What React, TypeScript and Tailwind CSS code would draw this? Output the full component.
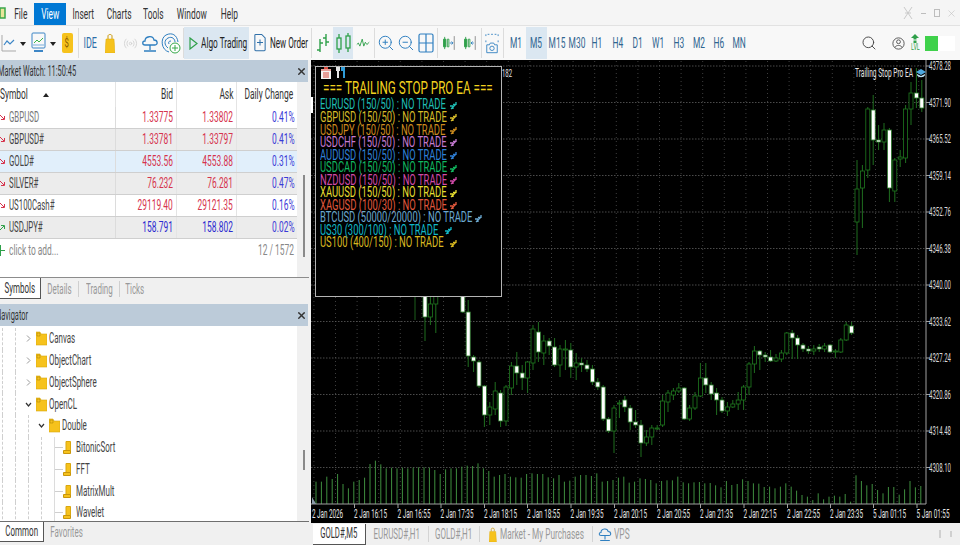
import type { ReactNode } from 'react'
import clsx from 'clsx'
import { twMerge } from 'tailwind-merge'
import { Radio, Search, X, ZoomIn, ZoomOut } from 'lucide-react'

const FONT = "font-['Roboto','Liberation_Sans',Arial,sans-serif]"

// the screenshot is squeezed horizontally, so all text goes through this
const T = ({ children, className }: { children: ReactNode; className?: string }) => (
  <span className={twMerge('inline-block shrink-0 origin-center scale-x-[0.6] whitespace-nowrap', className)}>{children}</span>
)

const Left = ({ children, className }: { children: ReactNode; className?: string }) => (
  <T className={clsx('origin-left', className)}>{children}</T>
)

const Right = ({ children, className }: { children: ReactNode; className?: string }) => (
  <T className={clsx('origin-right', className)}>{children}</T>
)

const Divider = ({ w = 4 }: { w?: number }) => (
  <div className={clsx('flex h-[34px] items-center justify-center', w === 2 ? 'w-[2px]' : w === 3 ? 'w-[3px]' : 'w-[4px]')}>
    <div className="h-[30px] w-px bg-[#dcdcdc]" />
  </div>
)

const Cell = ({ w, active, children }: { w: string; active?: boolean; children: ReactNode }) => (
  <div className={clsx('flex h-[32px] items-center justify-center', w, active && 'bg-[#dbe7f1]')}>{children}</div>
)

const Caret = () => <div className="mt-[2px] h-0 w-0 border-x-[3px] border-t-[4px] border-x-transparent border-t-[#222]" />

const LineIcon = () => (
  <svg width="16" height="20" viewBox="0 0 16 20" fill="none">
    <path d="M1 2v16h14" stroke="#a9a9a9" />
    <path d="M3 12l3-4 3 3 4-4" stroke="#3d86c6" strokeWidth="1.2" />
  </svg>
)

const TemplateIcon = () => (
  <svg width="15" height="22" viewBox="0 0 15 22" fill="none">
    <rect x="1" y="1" width="13" height="15" rx="1" stroke="#3d86c6" />
    <path d="M3 11l3-3 2 2 4-4" stroke="#3bb54a" />
    <path d="M2 13h11" stroke="#b7d3ea" strokeWidth="2" />
    <path d="M3 19h9" stroke="#3d86c6" strokeWidth="2" />
  </svg>
)

const BagIcon = ({ h = 20 }: { h?: number }) => (
  <svg width={h / 2} height={h} viewBox="0 0 10 20" fill="none" className="shrink-0">
    <path d="M3 6V3c0-2 4-2 4 0v3" stroke="#c99a10" />
    <path d="M1 6h8l1 14H0z" fill="#f6c21c" stroke="#dca80e" strokeWidth=".5" />
  </svg>
)

const CloudIcon = ({ size = 20 }: { size?: number }) => (
  <svg width={size} height={size} viewBox="0 0 20 20" fill="none" stroke="#2f7fc0" strokeWidth="1.3" className="shrink-0">
    <path d="M5 12c-3 0-3-4 0-4 0-5 8-6 9-1 4 0 4 5 1 5z" />
    <path d="M10 12v5M4 18h12" />
  </svg>
)

const TargetIcon = () => (
  <svg width="20" height="22" viewBox="0 0 20 22" fill="none">
    <path d="M8 20C0 18-1 6 5 3s11 0 12 7" stroke="#2f7fc0" />
    <path d="M7 16C3 13 3 8 7 6s7 1 7 4" stroke="#2f7fc0" />
    <path d="M8 12c-1-2 0-3 2-3" stroke="#2f7fc0" />
    <circle cx="14" cy="16" r="5" fill="#fff" stroke="#36a84a" />
    <path d="M14 13v6M11 16h6" stroke="#36a84a" />
  </svg>
)

const NewOrderIcon = () => (
  <svg width="12" height="22" viewBox="0 0 14 22" fill="none" stroke="#2f6fa8" strokeWidth="1.2" className="shrink-0">
    <path d="M9 1H2a1 1 0 0 0-1 1v17a1 1 0 0 0 1 1h10a1 1 0 0 0 1-1V5z" />
    <path d="M7 7v7M3.500 10.500h7" />
  </svg>
)

const BarsIcon = () => (
  <svg width="14" height="20" viewBox="0 0 14 20" fill="none" stroke="#2fa04a" strokeWidth="1.4">
    <path d="M4 6v13M1 17h3M4 10h3M10 1v12M7 5h3M10 9h3" />
  </svg>
)

const CandlesIcon = () => (
  <svg width="15" height="22" viewBox="0 0 15 22" fill="none" stroke="#2fa04a" strokeWidth="1.3">
    <rect x="1" y="6" width="4" height="11" />
    <path d="M3 2v4M3 17v4" />
    <rect x="10" y="4" width="4" height="12" />
    <path d="M12 1v3M12 16v4" />
  </svg>
)

const WaveIcon = () => (
  <svg width="14" height="14" viewBox="0 0 18 14" fill="none" stroke="#2fa04a" strokeWidth="1.2">
    <path d="M1 9l2-2 2 4 3-9 2 9 2-5 2 3 3-3" />
  </svg>
)

const GridIcon = () => (
  <svg width="16" height="20" viewBox="0 0 16 20" fill="none" stroke="#2f7fc0" strokeWidth="1.2">
    <rect x="1" y="1" width="14" height="18" rx="1.500" />
    <path d="M8 1v18M1 10h14" />
  </svg>
)

const ShiftIcon = ({ flip }: { flip?: boolean }) => (
  <svg width="13" height="20" viewBox="0 0 17 20" fill="none" strokeWidth="1.2">
    <path d="M2 5h3v10H2zM3.500 2v16" stroke="#2fa04a" fill="#2fa04a" />
    <path d="M7 5h2v10H7z" stroke="#2fa04a" />
    <path d="M16 1v18" stroke="#8a8a8a" />
    {flip ? <path d="M14 10h-3.500M12.500 8l-2 2 2 2" stroke="#2f7fc0" /> : <path d="M10 10h4M12.500 8l2 2-2 2" stroke="#2f7fc0" />}
  </svg>
)

const CameraIcon = () => (
  <svg width="14" height="23" viewBox="0 0 16 23" fill="none" stroke="#2f7fc0">
    <path d="M1 3V1h14v3M1 8v3M15 8v2" strokeDasharray="2 2" />
    <path d="M2 13h3l1-2h4l1 2h3v9H2z" />
    <circle cx="8" cy="17" r="2.500" />
  </svg>
)

const UserIcon = () => (
  <svg width="13" height="15" viewBox="0 0 15 15" fill="none" stroke="#444">
    <circle cx="7.500" cy="7.500" r="6.500" />
    <circle cx="7.500" cy="5.500" r="2.200" />
    <path d="M3.500 12c1-3 7-3 8 0" />
  </svg>
)

const toolbarFrames = ['M1', 'M5', 'M15', 'M30', 'H1', 'H4', 'D1', 'W1', 'H3', 'M2', 'H6', 'MN']

const Toolbar = () => (
  <div className="flex h-[34px] items-center bg-[#f8f8f8] text-[14px] text-[#222]">
    <Cell w="w-[18px]"><LineIcon /></Cell>
    <Cell w="w-[10px]"><Caret /></Cell>
    <Cell w="w-[20px]"><TemplateIcon /></Cell>
    <Cell w="w-[10px]"><Caret /></Cell>
    <Cell w="w-[18px]">
      <div className="flex h-[20px] w-[11px] items-center justify-center rounded-[2px] bg-[#f6c21c] text-[13px] text-[#8a5a00]">
        <T>$</T>
      </div>
    </Cell>
    <Divider />
    <Cell w="w-[20px]"><T className="text-[15px] text-[#2f6fa8]">IDE</T></Cell>
    <Cell w="w-[20px]"><BagIcon /></Cell>
    <Cell w="w-[20px]"><Radio size={15} strokeWidth={1.3} className="text-[#cfcfcf]" /></Cell>
    <Cell w="w-[20px]"><CloudIcon /></Cell>
    <Cell w="w-[22px]"><TargetIcon /></Cell>
    <Divider w={2} />
    <Cell w="w-[65px]" active>
      <div className="flex w-full items-center pl-[5px]">
        <svg width="9" height="13" viewBox="0 0 9 13" fill="none" stroke="#2fa04a" strokeWidth="1.2" className="shrink-0">
          <path d="M1 1l7 5.500-7 5.500z" />
        </svg>
        <Left className="ml-[3px] scale-x-[0.59]">Algo Trading</Left>
      </div>
    </Cell>
    <Cell w="w-[61px]">
      <div className="flex w-full items-center pl-[5px]">
        <NewOrderIcon />
        <Left className="ml-[4px] scale-x-[0.58]">New Order</Left>
      </div>
    </Cell>
    <Divider w={3} />
    <Cell w="w-[20px]"><BarsIcon /></Cell>
    <Cell w="w-[20px]" active><CandlesIcon /></Cell>
    <Cell w="w-[20px]"><WaveIcon /></Cell>
    <Divider w={2} />
    <Cell w="w-[21px]"><ZoomIn size={18} strokeWidth={1.3} className="text-[#2f7fc0]" /></Cell>
    <Cell w="w-[20px]"><ZoomOut size={18} strokeWidth={1.3} className="text-[#2f7fc0]" /></Cell>
    <Cell w="w-[20px]"><GridIcon /></Cell>
    <Divider w={2} />
    <Cell w="w-[21px]"><ShiftIcon /></Cell>
    <Cell w="w-[21px]"><ShiftIcon flip /></Cell>
    <Divider w={2} />
    <Cell w="w-[20px]"><CameraIcon /></Cell>
    <Divider w={3} />
    <div className="ml-px flex">
      {toolbarFrames.map((f) => (
        <Cell key={f} w="w-[20.300px]" active={f === 'M5'}>
          <T className="text-[14px] text-[#2f6590]">{f}</T>
        </Cell>
      ))}
    </div>
    <div className="flex-1" />
    <Search size={16} strokeWidth={1.4} className="mr-[15px] text-[#444]" />
    <UserIcon />
    <div className="ml-[4px] flex w-[12px] flex-col items-center text-[#2fa04a]">
      <svg width="8" height="9" viewBox="0 0 8 9" fill="#2fa04a"><path d="M4 0l4 4H5.500v1.500h-3V4H0zM2.500 6.500h3V9h-3z" /></svg>
      <T className="text-[9px] leading-[9px]">LVL</T>
    </div>
    <div className="ml-[4px] mr-[5px] flex h-[15px] w-[30px] bg-white">
      <div className="w-[13px] bg-[#3fd14b]" />
    </div>
  </div>
)

const MenuBar = () => {
  const items = [
    ['File', 'w-[26px]'],
    ['View', 'w-[32px]'],
    ['Insert', 'w-[34px]'],
    ['Charts', 'w-[38px]'],
    ['Tools', 'w-[30px]'],
    ['Window', 'w-[48px]'],
    ['Help', 'w-[26px]'],
  ]
  return (
    <div className="flex h-[26px] items-start border-b border-[#e2e2e2] bg-[#f5f5f5] text-[15px] text-[#333]">
      <svg width="8" height="26" viewBox="0 0 8 26" fill="none" className="shrink-0">
        <path d="M0 8h5v10H0z" stroke="#3aa64a" strokeWidth="1.500" fill="#e8e59a" />
      </svg>
      {items.map(([label, w]) => (
        <div
          key={label}
          className={clsx('mt-[3px] flex h-[22px] items-center justify-center', w, label === 'View' && 'bg-[#0078d4] text-white')}
        >
          <T className="scale-x-[0.56]">{label}</T>
        </div>
      ))}
      <div className="flex-1" />
      <div className="flex h-[26px] items-center pr-[3px] text-[#bdbdbd]">
        <svg width="10" height="14" viewBox="0 0 10 14" fill="none" stroke="#c9c9c9"><path d="M1 1l8 12M9 1L1 13M2 7h6" /></svg>
        <span className="ml-[8px] h-px w-[5px] bg-[#bdbdbd]" />
        <span className="ml-[8px] h-[8px] w-[6px] border border-[#bdbdbd]" />
        <X size={11} strokeWidth={1.2} className="ml-[6px]" />
      </div>
    </div>
  )
}

type Quote = { symbol: string; bid: string; ask: string; change: string; up?: boolean; bg: string; dim?: boolean }

const quotes: Quote[] = [
  { symbol: 'GBPUSD', bid: '1.33775', ask: '1.33802', change: '0.41%', bg: 'bg-white', dim: true },
  { symbol: 'GBPUSD#', bid: '1.33781', ask: '1.33797', change: '0.41%', bg: 'bg-[#ececec]' },
  { symbol: 'GOLD#', bid: '4553.56', ask: '4553.88', change: '0.31%', bg: 'bg-[#e1effb]' },
  { symbol: 'SILVER#', bid: '76.232', ask: '76.281', change: '0.47%', bg: 'bg-[#ececec]' },
  { symbol: 'US100Cash#', bid: '29119.40', ask: '29121.35', change: '0.16%', bg: 'bg-white' },
  { symbol: 'USDJPY#', bid: '158.791', ask: '158.802', change: '0.02%', up: true, bg: 'bg-[#ececec]' },
]

const QuoteRow = ({ q }: { q: Quote }) => {
  const priceColor = q.up ? 'text-[#2b2bd0]' : 'text-[#d6334c]'
  return (
    <div className={clsx('flex h-[22px] items-center border-b border-[#cfcfcf] text-[14px]', q.bg)}>
      <div className="flex w-[116px] items-center border-r border-[#dcdcdc] leading-[21px]">
        <svg width="5" height="7" viewBox="0 0 5 7" fill="none" className="shrink-0" stroke={q.up ? '#2fa04a' : '#d6334c'}>
          {q.up ? <path d="M0 6l4-4M1 1.500h3.500V5" /> : <path d="M0 1l4 4M1 5.500h3.500V2" />}
        </svg>
        <Left className={clsx('ml-[4px] scale-x-[0.56]', q.dim ? 'text-[#777]' : 'text-[#444]')}>{q.symbol}</Left>
      </div>
      <div className={clsx('flex w-[61px] justify-end border-r border-[#e4e4e4] pr-[3px] leading-[21px]', priceColor)}><Right>{q.bid}</Right></div>
      <div className={clsx('flex w-[60px] justify-end border-r border-[#e4e4e4] pr-[3px] leading-[21px]', priceColor)}><Right>{q.ask}</Right></div>
      <div className="flex w-[60px] justify-end pr-[2px] leading-[21px] text-[#3a3ad6]"><Right>{q.change}</Right></div>
    </div>
  )
}

const PanelHeader = ({ title, indent }: { title: string; indent: string }) => (
  <div className="flex h-[22px] w-[308px] shrink-0 items-center bg-[#bccbd9] text-[14px] text-[#333]">
    <Left className={clsx('scale-x-[0.53]', indent)}>{title}</Left>
    <div className="flex-1" />
    <X size={11} strokeWidth={3} className="mr-[1px] text-[#333]" />
  </div>
)

const MarketWatch = () => (
  <div className="flex h-[217px] shrink-0 flex-col">
    <PanelHeader title="Market Watch: 11:50:45" indent="-ml-[2px]" />
    <div className="flex flex-1">
      <div className="flex w-[297px] flex-col bg-white">
        <div className="flex h-[25px] items-center text-[14px] text-[#333]">
          <div className="flex h-full w-[116px] items-center border-r border-[#e4e4e4]">
            <Left>Symbol</Left>
            <div className="-ml-[3px] h-0 w-0 border-x-[3px] border-b-[4px] border-x-transparent border-b-[#222]" />
          </div>
          <div className="flex h-full w-[61px] items-center justify-end border-r border-[#e4e4e4] pr-[3px]"><Right>Bid</Right></div>
          <div className="flex h-full w-[60px] items-center justify-end border-r border-[#e4e4e4] pr-[3px]"><Right>Ask</Right></div>
          <div className="flex h-full w-[60px] items-center justify-end pr-[4px]"><Right>Daily Change</Right></div>
        </div>
        {quotes.map((q) => (
          <QuoteRow key={q.symbol} q={q} />
        ))}
        <div className="flex h-[23px] items-center text-[14px] text-[#888]">
          <span className="relative mr-[3px] h-[11px] w-[6px] shrink-0">
            <span className="absolute left-0 top-0 h-[11px] w-px bg-[#2fa04a]" />
            <span className="absolute left-0 top-[5px] h-px w-[5px] bg-[#2fa04a]" />
          </span>
          <Left>click to add...</Left>
          <div className="flex-1" />
          <Right className="mr-[3px]">12 / 1572</Right>
        </div>
      </div>
      <div className="flex w-[13px] flex-col bg-[#f0f0f0]">
        <div className="ml-[6px] mt-[93px] h-[82px] w-[2px] bg-[#8a8a8a]" />
      </div>
    </div>
  </div>
)

const WatchTabs = () => {
  const tabs = ['Details', 'Trading', 'Ticks']
  return (
    <div className="flex h-[27px] w-[309px] shrink-0 items-start border-t border-[#8c8c8c] bg-[#f0f0f0] text-[14px]">
      <div className="flex h-[21px] w-[41px] items-center justify-center border-r border-b border-[#555] bg-white text-[#333]">
        <T className="scale-x-[0.57]">Symbols</T>
      </div>
      {tabs.map((t, i) => (
        <div
          key={t}
          className={clsx(
            'mt-[3px] flex h-[16px] items-center justify-center text-[#999]',
            i < 2 && 'border-r border-[#cfcfcf]',
            i === 0 ? 'w-[38px]' : i === 1 ? 'w-[41px]' : 'w-[30px]',
          )}
        >
          <T className="scale-x-[0.57]">{t}</T>
        </div>
      ))}
    </div>
  )
}

type Node = { label: string; level: 0 | 1 | 2; open?: boolean }

const tree: Node[] = [
  { label: 'Canvas', level: 0 },
  { label: 'ObjectChart', level: 0 },
  { label: 'ObjectSphere', level: 0 },
  { label: 'OpenCL', level: 0, open: true },
  { label: 'Double', level: 1, open: true },
  { label: 'BitonicSort', level: 2 },
  { label: 'FFT', level: 2 },
  { label: 'MatrixMult', level: 2 },
  { label: 'Wavelet', level: 2 },
]

const Folder = () => (
  <svg width="11" height="15" viewBox="0 0 11 15" className="shrink-0">
    <path d="M0 1h4l1 2h6v11H0z" fill="#f6c21c" stroke="#d9a70f" strokeWidth=".6" />
    <path d="M1 2h3v3H1z" fill="none" stroke="#a67c00" strokeWidth=".5" />
  </svg>
)

const Script = () => (
  <svg width="8" height="13" viewBox="0 0 8 13" className="shrink-0">
    <path d="M3 .5h4.500v9H3z" fill="#f6c21c" stroke="#d9a70f" />
    <path d="M.5 9.500h7v3h-7z" fill="#f6c21c" stroke="#c9960a" />
  </svg>
)

const Chevron = ({ open }: { open?: boolean }) => (
  <svg width="7" height="7" viewBox="0 0 7 7" fill="none" stroke={open ? '#333' : '#999'} strokeWidth={open ? 1.2 : 1} className="shrink-0">
    {open ? <path d="M1 2l2.500 3L6 2" /> : <path d="M2 .5l3 3-3 3" />}
  </svg>
)

const TreeRow = ({ node }: { node: Node }) => (
  <div className="relative flex h-[21.750px] items-center text-[14px] text-[#444]">
    <span className="absolute inset-y-0 left-[2px] border-l border-dashed border-[#cfcfcf]" />
    <span className="absolute inset-y-0 left-[15px] border-l border-dashed border-[#cfcfcf]" />
    {node.level > 0 && <span className="absolute inset-y-0 left-[28px] border-l border-dashed border-[#cfcfcf]" />}
    {node.level === 2 && <span className="absolute inset-y-0 left-[41px] border-l border-dashed border-[#cfcfcf]" />}
    {node.level === 2 && <span className="absolute inset-y-0 left-[54px] border-l border-[#dcdcdc]" />}
    {node.level === 0 && (
      <>
        <span className="ml-[25px] flex w-[11px]"><Chevron open={node.open} /></span>
        <Folder />
        <Left className="ml-[2px] scale-x-[0.57]">{node.label}</Left>
      </>
    )}
    {node.level === 1 && (
      <>
        <span className="ml-[38px] flex w-[11px]"><Chevron open={node.open} /></span>
        <Folder />
        <Left className="ml-[2px] scale-x-[0.57]">{node.label}</Left>
      </>
    )}
    {node.level === 2 && (
      <>
        <span className="ml-[54px] h-px w-[9px] bg-[#cfcfcf]" />
        <Script />
        <Left className="ml-[5px] scale-x-[0.57]">{node.label}</Left>
      </>
    )}
  </div>
)

const Navigator = () => (
  <div className="flex min-h-0 flex-1 flex-col">
    <PanelHeader title="Navigator" indent="-ml-[4px]" />
    <div className="flex min-h-0 flex-1">
      <div className="w-[297px] overflow-hidden bg-white pt-[2px]">
        {tree.map((n) => (
          <TreeRow key={n.label} node={n} />
        ))}
      </div>
      <div className="w-[13px] bg-[#f0f0f0]">
        <div className="ml-[6px] mt-[124px] h-[20px] w-[2px] bg-[#8a8a8a]" />
      </div>
    </div>
    <div className="flex h-[24px] w-[309px] shrink-0 items-start border-t border-[#6f6f6f] bg-[#f0f0f0] text-[14px]">
      <div className="flex h-[20px] w-[44px] items-center justify-center border-r border-b border-[#555] bg-white text-[#333]">
        <T className="scale-x-[0.57]">Common</T>
      </div>
      <div className="flex h-[20px] w-[46px] items-center justify-center text-[#999]">
        <T className="scale-x-[0.57]">Favorites</T>
      </div>
    </div>
  </div>
)

// [slot, bodyTop, bodyBottom, wickTop, wickBottom, white]
const candles: [number, number, number, number, number, number][] = [
  [0, 296, 317, 290, 341, 1], [1, 304, 317, 296, 325, 0], [2, 296, 304, 290, 333, 0], [7, 290, 312, 288, 313, 1],
  [8, 312, 356, 300, 367, 1], [9, 357, 361, 355, 372, 1], [10, 362, 386, 360, 388, 1], [11, 386, 415, 385, 427, 1],
  [12, 407, 415, 402, 425, 0], [13, 391, 409, 382, 415, 0], [14, 393, 421, 390, 427, 1], [15, 387, 421, 385, 426, 0],
  [16, 366, 388, 362, 395, 0], [17, 366, 373, 352, 385, 1], [18, 373, 378, 365, 390, 1], [19, 362, 378, 361, 393, 0],
  [20, 329, 363, 325, 370, 0], [21, 332, 352, 322, 362, 1], [22, 341, 353, 335, 365, 0], [23, 341, 346, 338, 355, 1],
  [24, 347, 365, 338, 367, 1], [25, 349, 365, 345, 377, 0], [26, 349, 350, 340, 370, 0], [27, 350, 367, 343, 378, 1],
  [28, 363, 367, 353, 380, 0], [29, 363, 365, 358, 372, 1], [30, 365, 369, 360, 372, 1], [31, 369, 382, 365, 385, 1],
  [32, 382, 387, 378, 390, 1], [33, 387, 419, 385, 421, 1], [34, 419, 431, 417, 433, 1], [35, 408, 431, 405, 453, 0],
  [36, 403, 404, 400, 418, 0], [37, 400, 407, 396, 412, 1], [38, 408, 422, 405, 430, 1], [39, 422, 425, 410, 428, 1],
  [40, 425, 443, 420, 457, 1], [41, 437, 443, 430, 446, 0], [42, 428, 437, 425, 445, 0], [43, 428, 429, 425, 430, 0],
  [44, 401, 425, 395, 427, 0], [45, 393, 402, 390, 412, 0], [46, 391, 395, 388, 400, 0], [47, 388, 391, 383, 393, 0],
  [48, 388, 419, 387, 420, 1], [49, 408, 419, 405, 421, 0], [50, 396, 408, 392, 410, 0], [51, 378, 396, 363, 397, 0],
  [52, 378, 385, 363, 393, 1], [53, 385, 394, 382, 400, 1], [54, 393, 400, 388, 415, 1], [55, 400, 411, 397, 413, 1],
  [56, 407, 411, 402, 416, 0], [57, 404, 407, 400, 408, 0], [58, 400, 404, 392, 410, 0], [59, 387, 400, 385, 410, 0],
  [60, 364, 387, 362, 395, 0], [61, 351, 364, 346, 373, 0], [62, 351, 355, 350, 370, 1], [63, 355, 357, 352, 362, 1],
  [64, 357, 361, 350, 362, 1], [65, 358, 361, 354, 362, 0], [66, 353, 359, 350, 362, 0], [67, 333, 353, 332, 355, 0],
  [68, 333, 338, 330, 359, 1], [69, 338, 345, 335, 359, 1], [70, 345, 349, 343, 352, 1], [71, 349, 351, 346, 354, 1],
  [72, 349, 351, 345, 355, 0], [73, 347, 349, 344, 352, 1], [74, 346, 349, 343, 352, 0], [75, 345, 352, 344, 353, 1],
  [76, 351, 352, 349, 358, 0], [77, 340, 352, 338, 353, 0], [78, 325, 340, 322, 341, 0], [79, 326, 333, 322, 335, 1],
  [80, 189, 222, 160, 255, 0], [81, 171, 188, 165, 228, 0], [82, 109, 170, 107, 178, 0], [83, 110, 140, 95, 165, 1],
  [84, 140, 142, 125, 150, 1], [85, 130, 142, 123, 150, 0], [86, 130, 188, 128, 202, 1], [87, 160, 191, 158, 202, 0],
  [88, 157, 159, 150, 167, 0], [89, 109, 158, 105, 163, 0], [90, 93, 109, 82, 125, 0], [91, 93, 98, 68, 108, 1],
  [92, 98, 108, 80, 112, 1],
]

// tops of the volume bars as read off the screenshot (3x coordinates, floor at 612)
const volumeTops = [
  545, 545, 530, 537, 522, 552, 565, 545, 540, 533, 492, 482, 493, 505, 503, 505, 503, 505, 503, 502, 502, 503, 510, 522, 508, 505, 505, 500, 497,
  498, 490, 505, 513, 530, 525, 522, 530, 532, 533, 522, 520, 522, 522, 532, 535, 525, 545, 542, 530, 525, 525, 528, 520, 545, 543, 540, 533, 530,
  548, 545, 535, 537, 540, 550, 543, 541, 541, 530, 547, 550, 547, 546, 550, 549, 556, 562, 543, 555, 552, 538, 543, 550, 551, 561, 560, 565, 560,
  550, 560, 572, 585, 590, 600, 580, 598, 590, 587, 590, 582, 605, 526, 543, 556, 552, 570, 580, 561, 561, 584, 568, 543, 562, 558,
]

const prices = ['4378.28', '4371.90', '4365.52', '4359.14', '4352.76', '4346.38', '4340.00', '4333.62', '4327.24', '4320.86', '4314.48', '4308.10']

const times: [string, number][] = [
  ['2 Jan 16:15', 354], ['2 Jan 16:55', 397.500], ['2 Jan 17:35', 440.500], ['2 Jan 18:15', 484], ['2 Jan 18:55', 527], ['2 Jan 19:35', 570.500],
  ['2 Jan 20:15', 614], ['2 Jan 20:55', 657], ['2 Jan 21:35', 700], ['2 Jan 22:15', 743.500], ['2 Jan 22:55', 787], ['2 Jan 23:35', 830],
  ['5 Jan 01:15', 873], ['5 Jan 01:55', 916.500],
]

const ChartCanvas = () => (
  <svg viewBox="311 60 649 463" width="649" height="463" className="block" fontFamily="Roboto, Liberation Sans, Arial, sans-serif">
    {Array.from({ length: 29 }, (_, k) => {
      const x = 311 + 21.6 * k + 2.900
      return <line key={k} x1={x} x2={x} y1={61} y2={504} stroke="#4e4e4e" strokeWidth=".8" strokeDasharray="1 3" />
    })}
    {prices.map((p, k) => {
      const y = 66 + 36.5 * k
      return (
        <g key={p}>
          <line x1={311} x2={926} y1={y} y2={y} stroke="#5e5e5e" strokeWidth=".8" strokeDasharray="1.500 1.500" />
          <line x1={926} x2={930} y1={y} y2={y} stroke="#a0a0a0" />
          <text x={929} y={y + 4} fontSize="12" fill="#d8d8d8" textLength="22" lengthAdjust="spacingAndGlyphs">{p}</text>
        </g>
      )
    })}
    {volumeTops.map((top, i) => {
      const x = 316 + i * 5.4
      return <line key={i} x1={x} x2={x} y1={504 - (612 - top) / 3} y2={504} stroke="#3f8f3f" strokeWidth="1" />
    })}
    <line x1={415} x2={415} y1={296} y2={320} stroke="#1d5f1d" />
    <rect x={311} y={97} width={2} height={16} fill="#fff" />
    {candles.map(([slot, top, bottom, wickTop, wickBottom, white]) => {
      const x = 425 + slot * 5.4
      return (
        <g key={slot}>
          <line x1={x} x2={x} y1={wickTop} y2={wickBottom} stroke="#1f6e1f" />
          <rect
            x={x - 2}
            y={top}
            width={4}
            height={Math.max(bottom - top, 1)}
            fill={white ? '#ffffff' : '#000000'}
            stroke={white ? '#2c7a2c' : '#1f7a1f'}
            strokeWidth=".8"
          />
        </g>
      )
    })}
    <line x1={926} x2={926} y1={60} y2={504} stroke="#a0a0a0" />
    <line x1={311} x2={926} y1={504} y2={504} stroke="#a0a0a0" />
    <path d="M312 504v-7l4 7z" fill="#8a9aa8" />
    <text x={312} y={518} fontSize="12" fill="#e4e4e4" textLength="31" lengthAdjust="spacingAndGlyphs">2 Jan 2026</text>
    {times.map(([t, x]) => (
      <g key={t}>
        <line x1={x + 0.5} x2={x + 0.5} y1={504} y2={508} stroke="#a0a0a0" />
        <text x={x} y={518} fontSize="12" fill="#e4e4e4" textLength="33" lengthAdjust="spacingAndGlyphs">{t}</text>
      </g>
    ))}
    <text x={502} y={77} fontSize="11" fill="#e4e4e4" textLength="10" lengthAdjust="spacingAndGlyphs">182</text>
    <text x={855} y={77} fontSize="12" fill="#e4e4e4" textLength="58" lengthAdjust="spacingAndGlyphs">Trailing Stop  Pro EA</text>
    <path d="M916 72l5-3 5 3-5 3z" fill="#4fa8e0" />
    <path d="M917 75c1 3 7 3 8 0v-1l-4 2-4-2z" fill="#bfe4f8" />
  </svg>
)

const eaRows: [string, string, string][] = [
  ['EURUSD (150/50) : NO TRADE', 'text-[#1fbdb5]', '#1fbdb5'],
  ['GBPUSD (150/50) : NO TRADE', 'text-[#d8bd2a]', '#d8bd2a'],
  ['USDJPY (150/50) : NO TRADE', 'text-[#cc8a1e]', '#cc8a1e'],
  ['USDCHF (150/50) : NO TRADE', 'text-[#c47ad0]', '#c47ad0'],
  ['AUDUSD (150/50) : NO TRADE', 'text-[#2f80d8]', '#2f80d8'],
  ['USDCAD (150/50) : NO TRADE', 'text-[#10b860]', '#10b860'],
  ['NZDUSD (150/50) : NO TRADE', 'text-[#d04aa8]', '#d04aa8'],
  ['XAUUSD (150/50) : NO TRADE', 'text-[#e6de30]', '#e6de30'],
  ['XAGUSD (100/30) : NO TRADE', 'text-[#e0583c]', '#e0583c'],
  ['BTCUSD (50000/20000) : NO TRADE', 'text-[#6aa8d0]', '#6aa8d0'],
  ['US30 (300/100) : NO TRADE', 'text-[#10b8c8]', '#10b8c8'],
  ['US100 (400/150) : NO TRADE', 'text-[#d8b820]', '#d8b820'],
]

const RowMark = ({ color }: { color: string }) => (
  <svg width="7" height="9" viewBox="0 0 7 9" fill="none" stroke={color} strokeWidth="1.300" className="shrink-0">
    <path d="M1 8l5-5M6 1v3M3 3.500h3M0 5h3M3 8V6" />
  </svg>
)

const EaPanel = () => (
  <div className="absolute left-[4px] top-[6px] h-[231px] w-[187px] border border-[#b4b4b4] bg-black pl-[4px]">
    <div className="flex h-[11px] items-center gap-[5px] pl-px">
      <svg width="10" height="12" viewBox="0 0 10 12" className="shrink-0">
        <rect x="3" y="0" width="4" height="2" fill="#d8493c" />
        <rect y="2" width="10" height="10" fill="#f4f4f4" />
        <path d="M0 3h10M2 6h6M2 8h6M2 10h6" stroke="#d8493c" strokeWidth="1" />
      </svg>
      <svg width="9" height="11" viewBox="0 0 9 11" className="shrink-0">
        <path d="M0 0h4v4H3v7H1V4H0z" fill="#e6e6e6" />
        <path d="M5 0h4v11H7V4H5z" fill="#2f9bd8" />
      </svg>
    </div>
    <div className="mt-[1px] flex h-[17px] items-center text-[18px] text-[#f2d21f]">
      <Left className="ml-[3px] scale-x-[0.65]">=== TRAILING STOP PRO EA ===</Left>
    </div>
    <div className="mt-[3px] flex flex-col text-[14.500px]">
      {eaRows.map(([label, cls, color]) => (
        <div key={label} className={clsx('flex h-[12.550px] items-center', cls)}>
          <span className="flex w-0 items-center">
            <Left className="scale-x-[0.65]">{label}</Left>
          </span>
          <span className="flex items-center" style={{ marginLeft: label.length * 5 }}>
            <RowMark color={color} />
          </span>
        </div>
      ))}
    </div>
  </div>
)

const BottomTabs = () => (
  <div className="flex h-[22px] shrink-0 items-center bg-[#f0f0f0] text-[14px] text-[#999]">
    <div className="ml-[2px] flex h-[21px] w-[53px] items-center justify-center border-r border-b border-[#555] bg-white text-[#333]">
      <T className="scale-x-[0.55]">GOLD#,M5</T>
    </div>
    <div className="flex h-[16px] w-[63px] items-center justify-center border-r border-[#d4d4d4]"><T className="scale-x-[0.57]">EURUSD#,H1</T></div>
    <div className="flex h-[16px] w-[51px] items-center justify-center border-r border-[#d4d4d4]"><T className="scale-x-[0.57]">GOLD#,H1</T></div>
    <div className="flex h-[16px] w-[113px] items-center border-r border-[#d4d4d4] pl-[9px]">
      <BagIcon h={15} />
      <Left className="ml-[3px] scale-x-[0.59]">Market - My Purchases</Left>
    </div>
    <div className="flex items-center pl-[4px]">
      <CloudIcon size={16} />
      <Left className="ml-[1px]">VPS</Left>
    </div>
    <div className="flex-1" />
    <span className="mr-[9px] h-[8px] w-[2px] bg-[#d0d0d0]" />
    <span className="mr-[8px] h-[6px] w-[2px] bg-[#d0d0d0]" />
  </div>
)

export default function App() {
  return (
    <div className={clsx('flex h-[545px] w-[960px] flex-col overflow-hidden bg-[#f0f0f0]', FONT)}>
      <MenuBar />
      <Toolbar />
      <div className="flex min-h-0 flex-1">
        <div className="flex w-[311px] shrink-0 flex-col overflow-hidden bg-[#f0f0f0]">
          <MarketWatch />
          <WatchTabs />
          <Navigator />
        </div>
        <div className="flex min-w-0 flex-1 flex-col">
          <div className="relative h-[463px] shrink-0 overflow-hidden bg-black">
            <ChartCanvas />
            <EaPanel />
          </div>
          <BottomTabs />
        </div>
      </div>
    </div>
  )
}
